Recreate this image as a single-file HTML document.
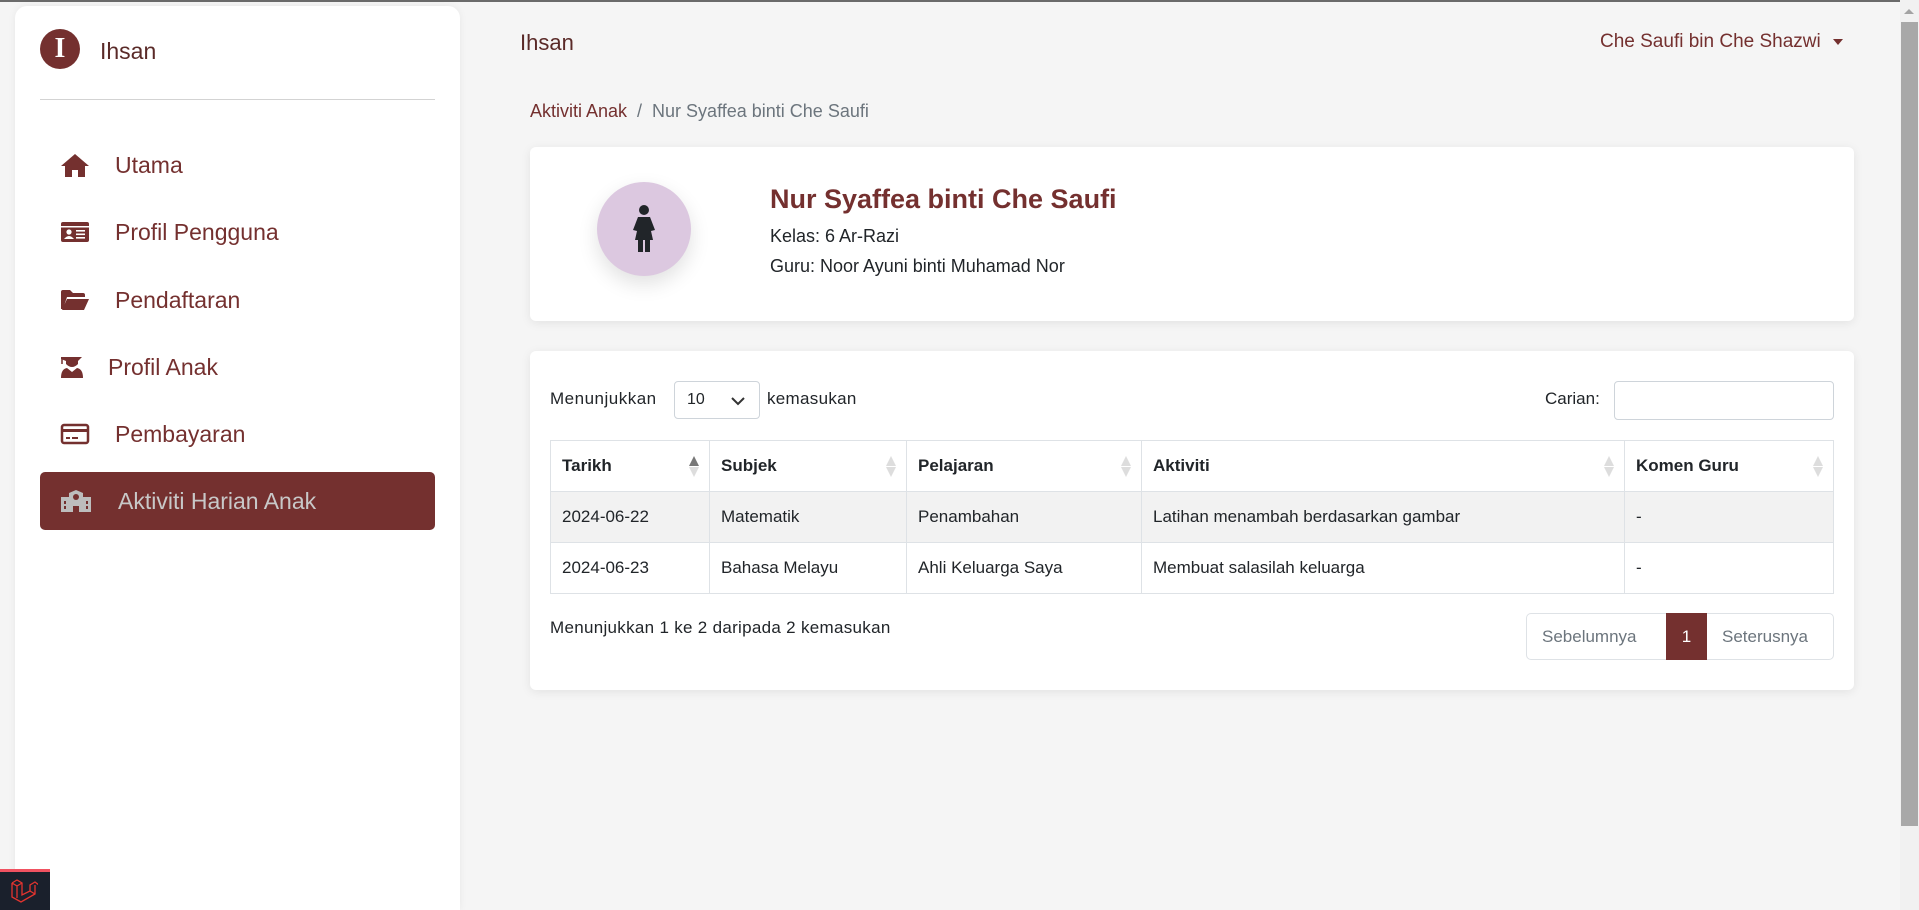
<!DOCTYPE html>
<html style="overflow:hidden;height:910px"><head><meta charset="utf-8"><style>
*{box-sizing:border-box;margin:0;padding:0}
body{width:1919px;height:910px;overflow:hidden;background:#f5f5f5;font-family:"Liberation Sans",sans-serif;position:relative;color:#212529}
.abs{position:absolute}
.topline{left:0;top:0;width:1919px;height:2px;background:#6b6b6b}
.side{left:15px;top:6px;width:445px;height:904px;background:#fff;border-radius:12px 12px 0 0;box-shadow:0 0 8px rgba(0,0,0,.06)}
.nav{position:absolute;left:40px;width:395px;height:58px;display:flex;align-items:center;font-size:23px;color:#74302f}
.nav svg{position:absolute;left:20px}
.nav span{position:absolute;left:75px}
.card{background:#fff;border-radius:6px;box-shadow:0 2px 10px rgba(0,0,0,.08)}
table{border-collapse:collapse;position:absolute;left:550px;top:440px;width:1284px;font-size:17px}
td,th{border:1px solid #dee2e6;padding:0 11px;text-align:left;height:51px;position:relative}
th{font-weight:bold}
.sort{position:absolute;right:10px;top:15px;width:10px;height:22px}
.sort:before{content:"";position:absolute;left:0;top:0;border:5px solid transparent;border-bottom:10px solid #ddd;border-top:0}
.sort:after{content:"";position:absolute;left:0;top:11px;border:5px solid transparent;border-top:10px solid #ddd;border-bottom:0}
.asc:before{border-bottom-color:#777}
</style></head><body>
<div class="abs topline"></div>
<div class="abs side"></div>
<div class="abs" style="left:40px;top:29px;width:40px;height:40px;border-radius:50%;background:#74302f;color:#fff;font:bold 28px 'Liberation Serif',serif;text-align:center;line-height:40px">I</div>
<div class="abs" style="left:100px;top:38px;font-size:23px;color:#5a2a28">Ihsan</div>
<div class="abs" style="left:40px;top:99px;width:395px;height:1px;background:#d3d3d3"></div>

<div class="nav" style="top:136px"><svg width="30" height="26" viewBox="0 0 30 26"><path d="M15 2 L1 14 H5 V25 H12 V18 H18 V25 H25 V14 H29 Z" fill="#74302f"/></svg><span>Utama</span></div>
<div class="nav" style="top:203px"><svg width="30" height="22" viewBox="0 0 30 22"><rect x="1" y="1" width="28" height="20" rx="2" fill="#74302f"/><rect x="1" y="5" width="28" height="1.5" fill="#fff"/><circle cx="9" cy="11" r="2.6" fill="#fff"/><path d="M4 18 Q9 12 14 18Z" fill="#fff"/><rect x="16" y="9" width="9" height="1.6" fill="#fff"/><rect x="16" y="12.5" width="9" height="1.6" fill="#fff"/><rect x="16" y="16" width="9" height="1.6" fill="#fff"/></svg><span>Profil Pengguna</span></div>
<div class="nav" style="top:271px"><svg width="30" height="22" viewBox="0 0 30 22"><path d="M1 3 Q1 1 3 1 H10 L13 4 H23 Q25 4 25 6 V8 H7 L3 20 H1Z M7 10 H29 L24 21 H2Z" fill="#74302f"/></svg><span>Pendaftaran</span></div>
<div class="nav" style="top:338px"><svg width="24" height="24" viewBox="0 0 24 24"><path d="M1 2 H22 L18 6 V9 Q12 15 6 9 V6 L1 4Z" fill="#74302f"/><path d="M2 4 V9" stroke="#74302f" stroke-width="1.5"/><path d="M1 23 Q1 14 7 13 L12 17 L17 13 Q23 14 23 23Z" fill="#74302f"/></svg><span style="left:68px">Profil Anak</span></div>
<div class="nav" style="top:405px"><svg width="30" height="22" viewBox="0 0 30 22"><rect x="2" y="2" width="26" height="18" rx="2" fill="none" stroke="#74302f" stroke-width="2.5"/><rect x="2" y="6" width="26" height="3" fill="#74302f"/><rect x="6" y="14" width="4" height="2" fill="#74302f"/><rect x="12" y="14" width="6" height="2" fill="#74302f"/></svg><span>Pembayaran</span></div>
<div class="nav" style="top:472px;background:#74302f;border-radius:5px;color:#c8c8c8"><svg width="32" height="24" viewBox="0 0 32 24"><path d="M1 8 H9 V4 L16 1 L23 4 V8 H31 V23 H19 V17 H13 V23 H1Z" fill="#bdbdbd"/><circle cx="16" cy="8" r="3" fill="#74302f"/><rect x="4" y="12" width="2" height="3" fill="#74302f"/><rect x="26" y="12" width="2" height="3" fill="#74302f"/><rect x="4" y="17" width="2" height="3" fill="#74302f"/><rect x="26" y="17" width="2" height="3" fill="#74302f"/></svg><span style="left:78px">Aktiviti Harian Anak</span></div>

<div class="abs" style="left:520px;top:30px;font-size:22px;color:#5a2a28">Ihsan</div>
<div class="abs" style="left:1600px;top:31px;font-size:19px;color:#74302f">Che Saufi bin Che Shazwi</div>
<div class="abs" style="left:1833px;top:39px;border:5px solid transparent;border-top:6px solid #74302f"></div>

<div class="abs" style="left:530px;top:101px;font-size:18px;color:#74302f">Aktiviti Anak <span style="color:#6c757d">&nbsp;/&nbsp; Nur Syaffea binti Che Saufi</span></div>

<div class="abs card" style="left:530px;top:147px;width:1324px;height:174px"></div>
<div class="abs" style="left:597px;top:182px;width:94px;height:94px;border-radius:50%;background:#dcc8e0;box-shadow:0 8px 20px rgba(0,0,0,.12)"></div>
<svg class="abs" style="left:632px;top:204px" width="24" height="52" viewBox="0 0 24 52"><circle cx="12" cy="6" r="5" fill="#212529"/><path d="M6 13 H18 L23 26 L19 27 L21 36 H3 L5 27 L1 26Z" fill="#212529"/><rect x="6" y="36" width="5" height="12" fill="#212529"/><rect x="13" y="36" width="5" height="12" fill="#212529"/></svg>
<div class="abs" style="left:770px;top:184px;font-size:27px;font-weight:bold;color:#74302f">Nur Syaffea binti Che Saufi</div>
<div class="abs" style="left:770px;top:226px;font-size:18px">Kelas: 6 Ar-Razi</div>
<div class="abs" style="left:770px;top:256px;font-size:18px">Guru: Noor Ayuni binti Muhamad Nor</div>

<div class="abs card" style="left:530px;top:351px;width:1324px;height:339px"></div>
<div class="abs" style="left:550px;top:389px;font-size:17px;letter-spacing:.5px">Menunjukkan</div>
<div class="abs" style="left:674px;top:381px;width:86px;height:38px;border:1px solid #ced4da;border-radius:4px;font-size:16px;padding:9px 12px">10<svg style="position:absolute;right:14px;top:15px" width="14" height="9" viewBox="0 0 14 9"><path d="M1 1 L7 7 L13 1" stroke="#333" stroke-width="2" fill="none"/></svg></div>
<div class="abs" style="left:767px;top:389px;font-size:17px;letter-spacing:.3px">kemasukan</div>
<div class="abs" style="left:1545px;top:389px;font-size:17px">Carian:</div>
<div class="abs" style="left:1614px;top:381px;width:220px;height:39px;border:1px solid #ced4da;border-radius:4px"></div>

<table>
<tr><th style="width:159px">Tarikh<i class="sort asc"></i></th><th style="width:197px">Subjek<i class="sort"></i></th><th style="width:235px">Pelajaran<i class="sort"></i></th><th style="width:483px">Aktiviti<i class="sort"></i></th><th>Komen Guru<i class="sort"></i></th></tr>
<tr style="background:#f2f2f2"><td>2024-06-22</td><td>Matematik</td><td>Penambahan</td><td>Latihan menambah berdasarkan gambar</td><td>-</td></tr>
<tr><td>2024-06-23</td><td>Bahasa Melayu</td><td>Ahli Keluarga Saya</td><td>Membuat salasilah keluarga</td><td>-</td></tr>
</table>

<div class="abs" style="left:550px;top:618px;font-size:17px;letter-spacing:.3px">Menunjukkan 1 ke 2 daripada 2 kemasukan</div>
<div class="abs" style="left:1526px;top:613px;width:308px;height:47px;border:1px solid #dee2e6;border-radius:5px;font-size:17px;color:#6c757d">
<span class="abs" style="left:15px;top:13px">Sebelumnya</span>
<span class="abs" style="left:139px;top:-1px;width:41px;height:47px;background:#74302f;color:#fff;text-align:center;line-height:47px">1</span>
<span class="abs" style="left:195px;top:13px">Seterusnya</span>
</div>

<div class="abs" style="left:1900px;top:0;width:19px;height:910px;background:#f1f1f1"></div>
<div class="abs" style="left:1904px;top:9px;border:5px solid transparent;border-bottom:5px solid #a3a3a3;border-top:0"></div>
<div class="abs" style="left:1901px;top:22px;width:17px;height:804px;background:#a8a8a8"></div>

<div class="abs" style="left:0;top:869px;width:50px;height:41px;background:#1a202c;border-top:3px solid #f05261"></div>
<svg class="abs" style="left:10px;top:878px" width="28" height="26" viewBox="0 0 28 26"><path d="M2 5 L7 2 L12 5 V17 L20 13 V7 L25 4 L29 7" stroke="#e3342f" stroke-width="1.3" fill="none"/><path d="M2 5 V19 L11 24 L25 16 V7 M20 13 L25 16 M2 5 L7 8 V20 M7 8 L12 5" stroke="#e3342f" stroke-width="1.3" fill="none"/></svg>
</body></html>
